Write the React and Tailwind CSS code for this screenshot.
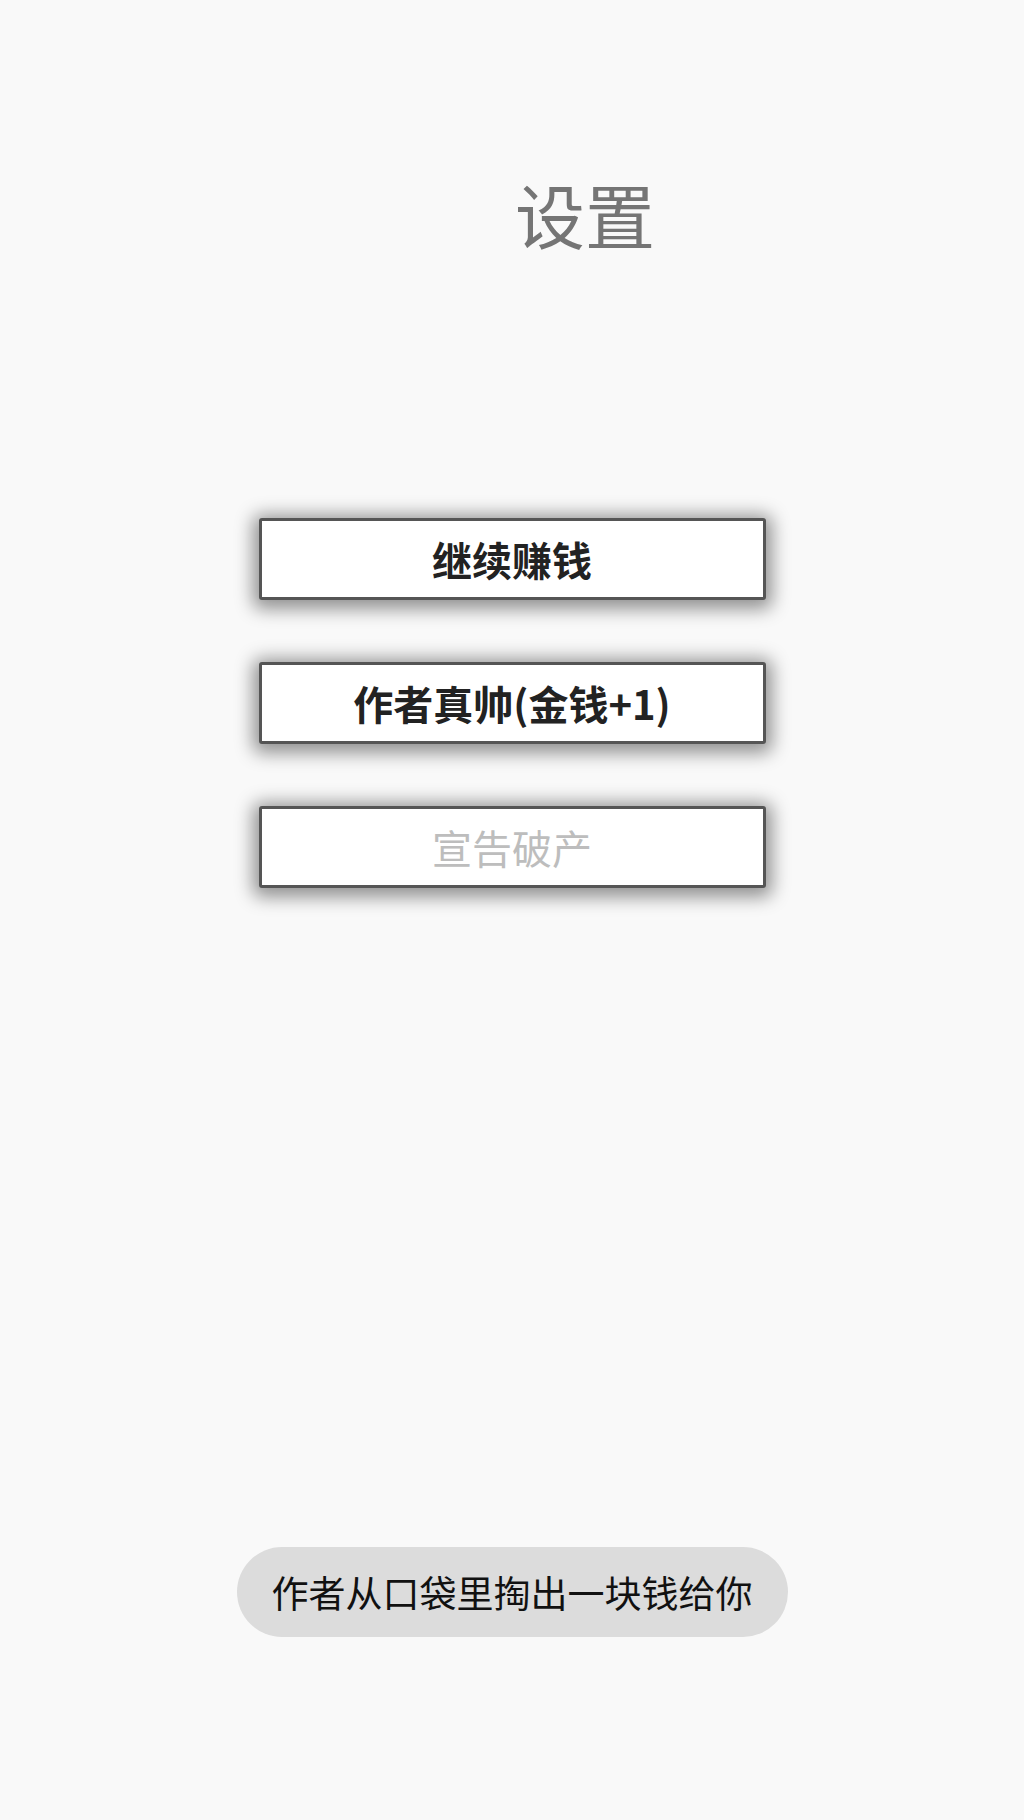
const FONT = { fontFamily: '"Noto Sans CJK SC", "Noto Sans", sans-serif' };

const buttons = [
  { label: '继续赚钱', cls: 'font-bold text-[#222222]' },
  { label: '作者真帅(金钱+1)', cls: 'font-bold text-[#222222]' },
  { label: '宣告破产', cls: 'font-normal text-[#bdbdbd]' },
];

export default function App() {
  return (
    <div className="min-h-[1820px] w-[1024px] bg-[#f9f9f9] flex flex-col items-center" style={FONT}>
      {/* header */}
      <h1 className="mt-[179px] pl-[146px] text-[70px] leading-none font-normal text-[#757575]">设置</h1>

      {/* menu */}
      <div className="mt-[269px] flex flex-col gap-[62px]">
        {buttons.map((b) => (
          <button
            key={b.label}
            className={`w-[507px] h-[82px] bg-white border-[3px] border-[#555555] rounded-[3px] shadow-[0_3px_18px_6px_rgba(0,0,0,0.42)] text-[40px] leading-none ${b.cls}`}
          >
            {b.label}
          </button>
        ))}
      </div>

      {/* toast */}
      <div className="mt-[659px] h-[90px] px-[35px] rounded-full bg-[#dcdcdc] flex items-center text-[37px] leading-none text-[#111111]">
        作者从口袋里掏出一块钱给你
      </div>
    </div>
  );
}
